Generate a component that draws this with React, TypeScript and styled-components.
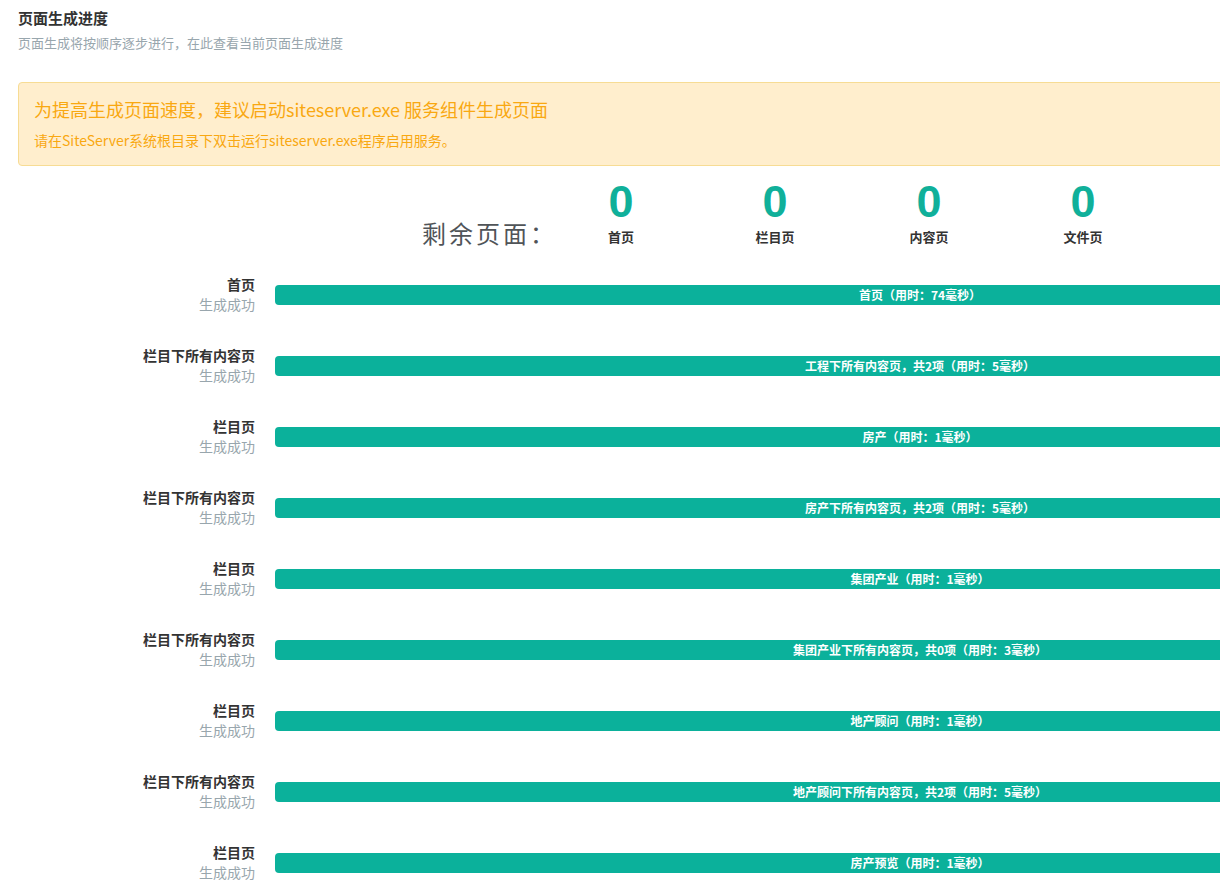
import React from "react";
import styled, { createGlobalStyle } from "styled-components";

const GlobalStyle = createGlobalStyle`
  html, body {
    margin: 0;
    padding: 0;
    overflow: hidden;
    background: #fff;
  }
  body {
    font-family: "Noto Sans CJK SC", "Noto Sans", sans-serif;
    color: #333;
  }
`;

const Page = styled.div`
  width: 1600px;
  padding: 8px 0 0 18px;
`;

const Title = styled.h4`
  margin: 0;
  font-size: 15px;
  font-weight: 700;
  line-height: 20px;
  color: #333;
`;

const Subtitle = styled.p`
  margin: 5px 0 0;
  font-size: 13px;
  line-height: 20px;
  color: #98a6ad;
`;

const Alert = styled.div`
  margin-top: 29px;
  box-sizing: border-box;
  height: 84px;
  padding: 13px 15px 0;
  background: #ffeecd;
  border: 1px solid #f7dc94;
  border-radius: 4px;
  color: #f9a811;
`;

const AlertTitle = styled.div`
  font-size: 18px;
  line-height: 26px;
`;

const AlertText = styled.div`
  margin-top: 8px;
  font-size: 14px;
  line-height: 20px;
`;

const Stats = styled.div`
  display: flex;
  align-items: flex-end;
  margin-top: 10px;
`;

const StatsLabel = styled.div`
  width: 539px;
  margin-right: -13px;
  box-sizing: border-box;
  text-align: right;
  font-size: 24px;
  line-height: 30px;
  letter-spacing: 3px;
  color: #505458;
  margin-bottom: -2px;
`;

const Stat = styled.div`
  width: 154px;
  display: flex;
  flex-direction: column;
  align-items: center;
`;

const StatNum = styled.div`
  font-family: "Liberation Sans", Arial, sans-serif;
  font-size: 45px;
  font-weight: 700;
  line-height: 52px;
  color: #10b09a;
`;

const StatName = styled.div`
  font-size: 13px;
  font-weight: 700;
  line-height: 18px;
  color: #333;
`;

const Rows = styled.div`
  margin-top: 28px;
  display: flex;
  flex-direction: column;
  gap: 31px;
`;

const Row = styled.div`
  display: flex;
  align-items: flex-start;
`;

const Label = styled.div`
  width: 237px;
  text-align: right;
  flex-shrink: 0;
`;

const LabelName = styled.div`
  font-size: 14px;
  font-weight: 700;
  line-height: 20px;
  color: #333;
`;

const LabelStatus = styled.div`
  font-size: 14px;
  line-height: 20px;
  color: #98a6ad;
`;

const Bar = styled.div`
  margin: 11px 0 0 20px;
  width: 1290px;
  height: 20px;
  border-radius: 4px;
  background: #0bb19b;
  color: #fff;
  font-size: 12px;
  font-weight: 700;
  line-height: 20px;
  text-align: center;
`;

const stats = ["首页", "栏目页", "内容页", "文件页"];

const rows = [
  ["首页", "首页（用时：74毫秒）"],
  ["栏目下所有内容页", "工程下所有内容页，共2项（用时：5毫秒）"],
  ["栏目页", "房产（用时：1毫秒）"],
  ["栏目下所有内容页", "房产下所有内容页，共2项（用时：5毫秒）"],
  ["栏目页", "集团产业（用时：1毫秒）"],
  ["栏目下所有内容页", "集团产业下所有内容页，共0项（用时：3毫秒）"],
  ["栏目页", "地产顾问（用时：1毫秒）"],
  ["栏目下所有内容页", "地产顾问下所有内容页，共2项（用时：5毫秒）"],
  ["栏目页", "房产预览（用时：1毫秒）"],
];

export default function App() {
  return (
    <Page>
      <GlobalStyle />
      <Title>页面生成进度</Title>
      <Subtitle>页面生成将按顺序逐步进行，在此查看当前页面生成进度</Subtitle>
      <Alert>
        <AlertTitle>为提高生成页面速度，建议启动siteserver.exe 服务组件生成页面</AlertTitle>
        <AlertText>请在SiteServer系统根目录下双击运行siteserver.exe程序启用服务。</AlertText>
      </Alert>
      <Stats>
        <StatsLabel>剩余页面：</StatsLabel>
        {stats.map((s) => (
          <Stat key={s}>
            <StatNum>0</StatNum>
            <StatName>{s}</StatName>
          </Stat>
        ))}
      </Stats>
      <Rows>
        {rows.map(([name, text], i) => (
          <Row key={i}>
            <Label>
              <LabelName>{name}</LabelName>
              <LabelStatus>生成成功</LabelStatus>
            </Label>
            <Bar>{text}</Bar>
          </Row>
        ))}
      </Rows>
    </Page>
  );
}
